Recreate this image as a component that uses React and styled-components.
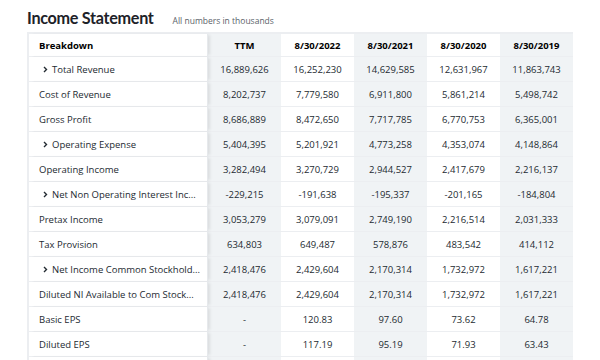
import styled, { createGlobalStyle } from 'styled-components';

const GlobalStyle = createGlobalStyle`
  body {
    margin: 0;
    background: #fff;
    font-family: 'Open Sans', 'Liberation Sans', sans-serif;
    overflow: hidden;
  }
`;

const columns = ['TTM', '8/30/2022', '8/30/2021', '8/30/2020', '8/30/2019'];

const rows = [
  { label: 'Total Revenue', expand: true, values: ['16,889,626', '16,252,230', '14,629,585', '12,631,967', '11,863,743'] },
  { label: 'Cost of Revenue', values: ['8,202,737', '7,779,580', '6,911,800', '5,861,214', '5,498,742'] },
  { label: 'Gross Profit', values: ['8,686,889', '8,472,650', '7,717,785', '6,770,753', '6,365,001'] },
  { label: 'Operating Expense', expand: true, values: ['5,404,395', '5,201,921', '4,773,258', '4,353,074', '4,148,864'] },
  { label: 'Operating Income', values: ['3,282,494', '3,270,729', '2,944,527', '2,417,679', '2,216,137'] },
  { label: 'Net Non Operating Interest Inc...', expand: true, values: ['-229,215', '-191,638', '-195,337', '-201,165', '-184,804'] },
  { label: 'Pretax Income', values: ['3,053,279', '3,079,091', '2,749,190', '2,216,514', '2,031,333'] },
  { label: 'Tax Provision', values: ['634,803', '649,487', '578,876', '483,542', '414,112'] },
  { label: 'Net Income Common Stockhold...', expand: true, values: ['2,418,476', '2,429,604', '2,170,314', '1,732,972', '1,617,221'] },
  { label: 'Diluted NI Available to Com Stock...', values: ['2,418,476', '2,429,604', '2,170,314', '1,732,972', '1,617,221'] },
  { label: 'Basic EPS', values: ['-', '120.83', '97.60', '73.62', '64.78'] },
  { label: 'Diluted EPS', values: ['-', '117.19', '95.19', '71.93', '63.43'] },
  { label: '', values: ['', '', '', '', ''] },
];

const Page = styled.div`
  padding: 5px 27px 0;
`;

const Header = styled.div`
  display: flex;
  align-items: baseline;
  gap: 19px;
  height: 24px;
  padding-top: 3px;
`;

const Title = styled.h1`
  margin: 0;
  font-family: Lato, 'Open Sans', sans-serif;
  font-size: 16.2px;
  font-weight: 700;
  color: #1d2228;
  letter-spacing: -0.3px;
`;

const Note = styled.span`
  font-size: 8.5px;
  color: #5b636a;
`;

const Table = styled.div`
  width: 546px;
  border-top: 2px solid #eceef1;
  border-left: 2px solid #eceef1;
  box-sizing: border-box;
`;

const Row = styled.div`
  display: grid;
  grid-template-columns: 179px repeat(5, 73px);
  height: ${p => (p.$head ? 22 : 24)}px;
  border-bottom: 1px solid #eceef1;
`;

const Label = styled.div`
  position: relative;
  z-index: 1;
  display: flex;
  align-items: center;
  gap: 4px;
  padding-left: ${p => (p.$expand ? 14 : 10)}px;
  background: #fff;
  font-size: 9.5px;
  font-weight: ${p => (p.$head ? 700 : 400)};
  color: ${p => (p.$head ? '#000' : '#232a31')};
  white-space: nowrap;
  overflow: hidden;
  box-shadow: 3px 0 3px -1px rgba(0, 0, 0, 0.09);
  border-right: 1px solid #e6e9ec;

  svg {
    flex-shrink: 0;
  }
`;

const Cell = styled.div`
  display: flex;
  align-items: center;
  justify-content: center;
  background: ${p => (p.$shade ? '#f0f3f5' : '#fff')};
  font-size: 9.5px;
  font-weight: ${p => (p.$head ? 700 : 400)};
  color: ${p => (p.$head ? '#000' : '#232a31')};
`;

const Chevron = () => (
  <svg width="5" height="7" viewBox="0 0 5 7">
    <path d="M1 1l2.5 2.5L1 6" fill="none" stroke="#232a31" strokeWidth="1.4" />
  </svg>
);

export default function App() {
  return (
    <Page>
      <GlobalStyle />
      <Header>
        <Title>Income Statement</Title>
        <Note>All numbers in thousands</Note>
      </Header>
      <Table>
        <Row $head>
          <Label $head>Breakdown</Label>
          {columns.map((c, i) => (
            <Cell key={c} $head $shade={i % 2 === 0}>{c}</Cell>
          ))}
        </Row>
        {rows.map((r, n) => (
          <Row key={n}>
            <Label $expand={r.expand}>
              {r.expand && <Chevron />}
              {r.label}
            </Label>
            {r.values.map((v, i) => (
              <Cell key={i} $shade={i % 2 === 0}>{v}</Cell>
            ))}
          </Row>
        ))}
      </Table>
    </Page>
  );
}
